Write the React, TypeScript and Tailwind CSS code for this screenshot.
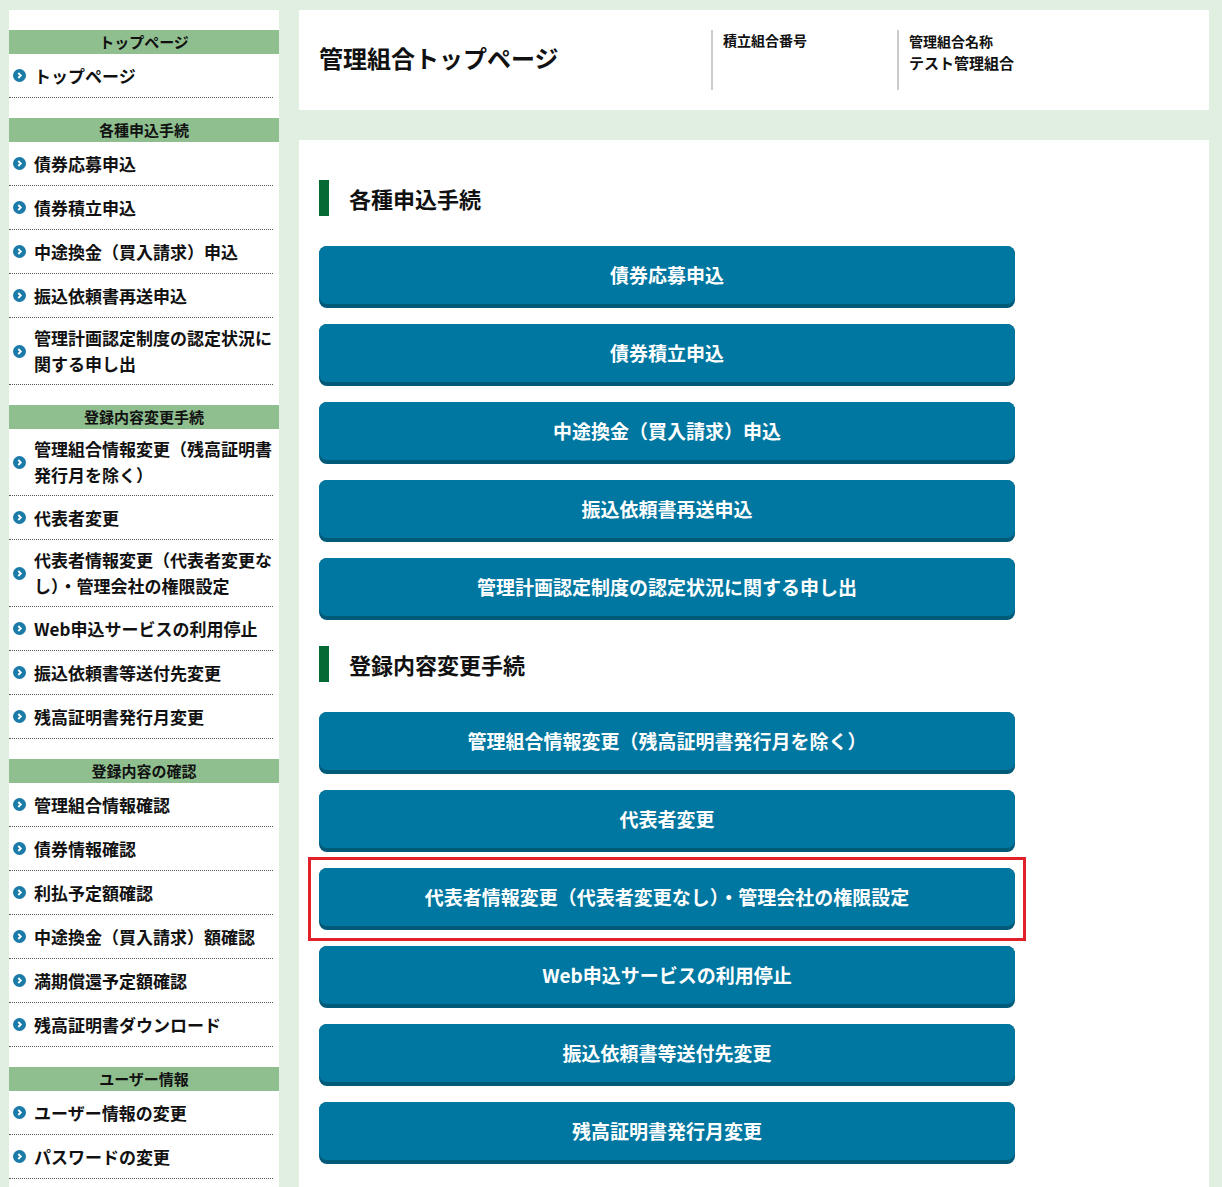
import * as React from 'react';

const font = { fontFamily: '"Noto Sans CJK JP", "Noto Sans", sans-serif' };

const groups: { title: string; items: string[] }[] = [
  { title: 'トップページ', items: ['トップページ'] },
  { title: '各種申込手続', items: ['債券応募申込', '債券積立申込', '中途換金（買入請求）申込', '振込依頼書再送申込', '管理計画認定制度の認定状況に関する申し出'] },
  { title: '登録内容変更手続', items: ['管理組合情報変更（残高証明書発行月を除く）', '代表者変更', '代表者情報変更（代表者変更なし）・管理会社の権限設定', 'Web申込サービスの利用停止', '振込依頼書等送付先変更', '残高証明書発行月変更'] },
  { title: '登録内容の確認', items: ['管理組合情報確認', '債券情報確認', '利払予定額確認', '中途換金（買入請求）額確認', '満期償還予定額確認', '残高証明書ダウンロード'] },
  { title: 'ユーザー情報', items: ['ユーザー情報の変更', 'パスワードの変更'] },
];

function Chevron() {
  return (
    <svg width="13" height="13" viewBox="0 0 13 13" className="shrink-0">
      <circle cx="6.5" cy="6.5" r="6.5" fill="#1a7aa8" />
      <path d="M5.3 4 L7.8 6.5 L5.3 9" stroke="#fff" strokeWidth="1.8" fill="none" />
    </svg>
  );
}

function Btn({ label }: { label: string }) {
  return (
    <div className="w-[696px] h-[62px] rounded-[8px] bg-[#005a78] pb-[4px]">
      <div className="h-full rounded-[8px] bg-[#0077a0] flex items-center justify-center text-white text-[19px] font-bold">{label}</div>
    </div>
  );
}

function Heading({ text }: { text: string }) {
  return (
    <div className="flex items-center h-[36px]">
      <div className="w-[10px] h-[36px] bg-[#066a35]" />
      <div className="ml-[20px] text-[22px] font-bold text-[#111]">{text}</div>
    </div>
  );
}

export default function App() {
  return (
    <div style={font} className="bg-[#e0efdf] w-[1222px] h-[1187px] overflow-hidden flex gap-[20px] pl-[9px] pt-[10px]">
      <div className="w-[270px] bg-white pt-[20px] flex flex-col gap-[20px] shrink-0">
        {groups.map((g) => (
          <div key={g.title}>
            <div className="h-[24px] bg-[#8fbf8f] flex items-center justify-center text-[15px] font-bold text-[#111]">{g.title}</div>
            {g.items.map((it) => (
              <div key={it} className="mr-[6px] border-b border-dotted border-[#555] flex items-center gap-[8px] pl-[4px] min-h-[44px] py-[7px]">
                <Chevron />
                <span className="text-[17px] font-bold text-[#111] leading-[26px]">{it}</span>
              </div>
            ))}
          </div>
        ))}
      </div>
      <div className="flex flex-col gap-[30px] w-[910px]">
        <div className="h-[100px] bg-white flex pt-[20px]">
          <div className="w-[412px] pl-[20px] pt-[10px] text-[24px] font-bold text-[#111]">管理組合トップページ</div>
          <div className="w-[186px] h-[60px] border-l-2 border-[#ccc] pl-[10px] text-[14px] font-bold text-[#111]">積立組合番号</div>
          <div className="h-[60px] border-l-2 border-[#ccc] pl-[10px] text-[14px] font-bold text-[#111] leading-[22px]">
            <div>管理組合名称</div>
            <div className="text-[15px]">テスト管理組合</div>
          </div>
        </div>
        <div className="flex-1 bg-white pl-[20px] pt-[40px]">
          <Heading text="各種申込手続" />
          <div className="mt-[30px] flex flex-col gap-[16px]">
            {groups[1].items.map((t) => <Btn key={t} label={t} />)}
          </div>
          <div className="mt-[26px]"><Heading text="登録内容変更手続" /></div>
          <div className="mt-[30px] flex flex-col gap-[16px]">
            {groups[2].items.map((t, i) =>
              i === 2 ? (
                <div key={t} className="-mx-[11px] -my-[11px] p-[8px] border-[3px] border-[#e0202a] w-fit">
                  <Btn label={t} />
                </div>
              ) : (
                <Btn key={t} label={t} />
              )
            )}
          </div>
        </div>
      </div>
    </div>
  );
}
